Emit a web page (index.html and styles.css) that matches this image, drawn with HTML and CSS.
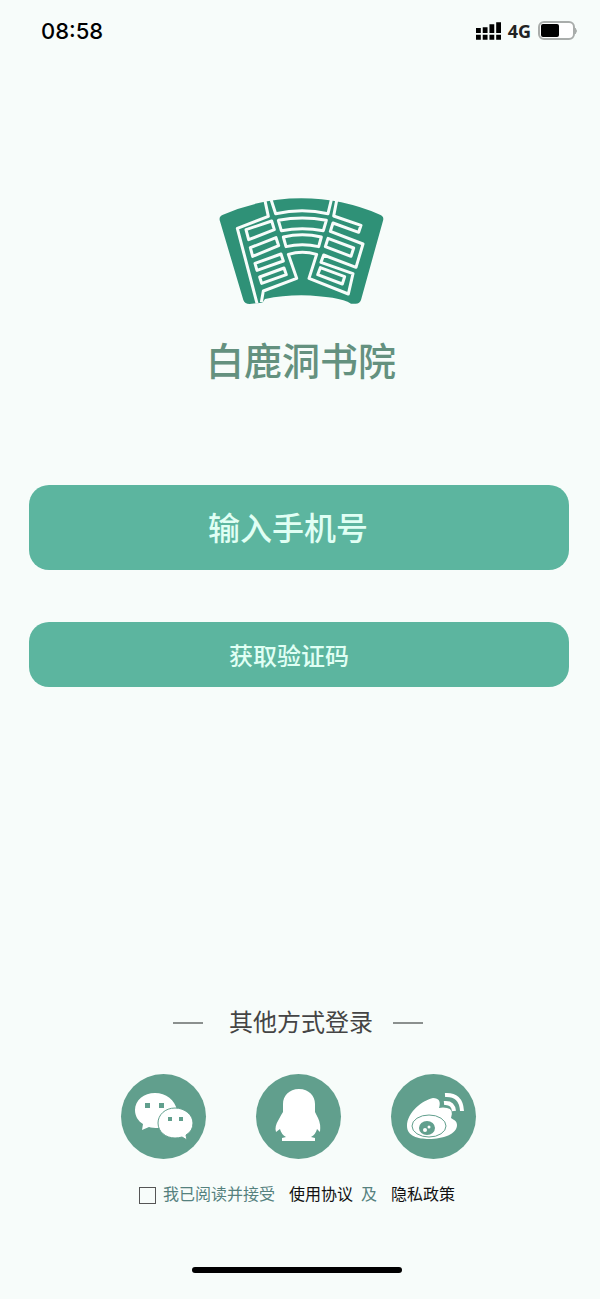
FILE: index.html
```html
<!DOCTYPE html>
<html lang="zh-CN">
<head>
<meta charset="utf-8">
<meta name="viewport" content="width=device-width, initial-scale=1">
<title>白鹿洞书院</title>
<link rel="stylesheet" href="styles.css">
</head>
<body>
<div class="screen">
  <header class="status">
    <time class="clock">08:58</time>
    <div class="indicators">
      <svg class="signal" viewBox="0 0 26 18" aria-hidden="true">
        <path d="M0 6h5v5H0zM7 5h5v6H7zM14 2h5v9h-5zM21 0h5v11h-5zM0 13h5v5H0zM7 13h5v5H7zM14 13h5v5h-5zM21 13h5v5h-5z"/>
      </svg>
      <span class="network">4G</span>
      <svg class="battery" viewBox="0 0 40 20" aria-hidden="true">
        <rect x="1" y="1" width="35" height="17" rx="5" fill="#fff" stroke="#a9adab" stroke-width="2"/>
        <rect x="3" y="3" width="18" height="13" rx="2"/>
        <path d="M37 7q3 3 0 6z" fill="#a9adab" stroke="#a9adab"/>
      </svg>
    </div>
  </header>

  <main class="content">
    <div class="brand">
      <svg class="logo" viewBox="30 24 495 318" aria-hidden="true">
        <path fill="#2f9177" d="M42 74Q155 25 277 25T513 74Q526 79 522 92L456 330Q452 342 438 341H426Q390 319 277 316Q220 316 168 327L160 338L122 342Q107 342 103 330L33 94Q28 79 42 74Z"/>
        <g class="seal" transform="translate(60 15)">
          <path d="M106 8L118 64L25 100L84 325"/>
          <path d="M123 4L140 56Q220 38 297 56L309 6"/>
          <path d="M325 6L314 63L396 91L389 112L312 84L304 109L402 147L381 217L284 180L276 202L372 236L358 297L240 250L263 178Q220 166 178 178L203 250L103 288L97 322"/>
          <path d="M148 76Q220 62 292 76L283 107Q220 95 157 107Z"/>
          <path d="M163 126Q220 113 277 126L269 155Q220 143 171 155Z"/>
          <path d="M51 104L128 78L136 104L59 134Z"/>
          <path d="M64 158L141 128L149 152L71 184Z"/>
          <path d="M78 205L156 177L163 198L84 226Z"/>
          <path d="M92 246L165 219L172 239L98 265Z"/>
          <path d="M297 130L374 159L366 184L289 155Z"/>
          <path d="M274 218L347 245L340 267L266 239Z"/>
        </g>
      </svg>
      <h1 class="name">白鹿洞书院</h1>
    </div>

    <form class="login" id="login">
      <input class="field phone" type="tel" placeholder="输入手机号" aria-label="输入手机号">
      <button class="field code" type="button">获取验证码</button>
    </form>

    <section class="other">
      <h2 class="divider"><span class="divider-text">其他方式登录</span></h2>
      <div class="socials">
        <button class="social" type="button" aria-label="微信">
          <svg viewBox="0 0 85 85" aria-hidden="true">
            <path fill="#fff" d="M34 19C23 19 14 26 14 36C14 42 17 47 22 50L21 56L28 53Q31 54 38 54L56 36C54 26 45 19 34 19Z"/>
            <path fill="#fff" stroke="#619f8d" stroke-width="1" d="M54 34C44 34 37 41 37 49C37 58 45 64 54 64Q58 64 61 63L66 66L65 61Q72 57 72 49C72 41 64 34 54 34Z"/>
            <path fill="#619f8d" d="M24 29h5v5h-5zM38 29h5v5h-5zM47 43h4v4h-4zM58 43h4v4h-4z"/>
          </svg>
        </button>
        <button class="social" type="button" aria-label="QQ">
          <svg viewBox="0 0 85 85" aria-hidden="true">
            <path fill="#fff" d="M43 15C33 15 27 22 27 30V38Q25 41 23 45Q18 53 20 58L24 55Q25 60 30 63L26 64V67H59V64L55 63Q60 60 61 55L64 58Q65 50 62 44L59 38V30C59 22 53 15 43 15Z"/>
          </svg>
        </button>
        <button class="social" type="button" aria-label="微博">
          <svg viewBox="0 0 85 85" aria-hidden="true">
            <path fill="#fff" d="M42 24C32 26 16 38 16 52C16 62 27 65 38 65C52 65 66 60 66 51C66 47 63 46 60 44Q63 35 56 34Q52 33 48 34Q51 24 42 24Z"/>
            <ellipse cx="38" cy="52" rx="17" ry="11" fill="#fff" stroke="#619f8d"/>
            <ellipse cx="36" cy="54" rx="8" ry="7" fill="#619f8d"/>
            <circle cx="34" cy="56" r="2" fill="#fff"/>
            <circle cx="38" cy="53" r="1.5" fill="#fff"/>
            <path fill="none" stroke="#fff" stroke-width="4" d="M54 21Q70 20 71 37M53 29Q62 28 63 37"/>
          </svg>
        </button>
      </div>
      <div class="terms">
        <input class="tick" type="checkbox" id="agree">
        <label class="agree" for="agree">我已阅读并接受</label>
        <a class="link" href="#terms">使用协议</a>
        <span class="and">及</span>
        <a class="link privacy" href="#privacy">隐私政策</a>
      </div>
    </section>
  </main>
  <div class="home-bar"></div>
</div>
</body>
</html>
```
FILE: styles.css
```css
* {
  box-sizing: border-box;
}

body {
  margin: 0;
  background: #f7fcfa;
  color: #000;
  font-family: "Liberation Sans", "Noto Sans CJK SC", sans-serif;
}

.screen {
  display: flex;
  flex-direction: column;
  align-items: center;
  min-height: 100vh;
  padding-bottom: 26px;
}

.status {
  display: flex;
  justify-content: space-between;
  align-items: center;
  align-self: stretch;
  height: 62px;
  padding: 0 22px 0 41px;
}

.clock {
  font-family: Inter, sans-serif;
  font-size: 22px;
  font-weight: 500;
}

.indicators {
  display: flex;
  align-items: center;
  gap: 7px;
}

.signal {
  width: 25px;
  height: 18px;
}

.network {
  color: #222;
  font-family: "Noto Sans", sans-serif;
  font-size: 18px;
  font-weight: 700;
  line-height: 24px;
}

.battery {
  width: 40px;
  height: 20px;
}

.content {
  display: flex;
  flex: 1;
  flex-direction: column;
  align-self: stretch;
  padding: 136px 31px 0 29px;
}

.brand {
  display: flex;
  flex-direction: column;
  align-items: center;
  gap: 30px;
  padding-left: 4px;
}

.logo {
  width: 165px;
  height: 106px;
}

.seal {
  fill: none;
  stroke: #f7fcfa;
  stroke-width: 9;
  stroke-linejoin: round;
}

.name {
  margin: 0;
  color: #64917f;
  font-size: 38px;
  font-weight: 500;
  line-height: 56px;
}

.login {
  display: flex;
  flex-direction: column;
  gap: 52px;
  margin-top: 95px;
}

.field {
  width: 100%;
  padding: 0 20px 0 0;
  border: 0;
  border-radius: 20px;
  background: #5cb59f;
  color: #e0fff4;
  font-family: inherit;
  font-weight: 500;
  text-align: center;
}

.phone {
  height: 85px;
  padding: 4px 22px 0 0;
  font-size: 32px;
}

.phone::placeholder {
  color: #e0fff4;
  opacity: 1;
}

.code {
  height: 65px;
  font-size: 24px;
}

.other {
  display: flex;
  flex-direction: column;
  align-items: center;
  margin-top: auto;
  padding: 0 2px 60px 0;
}

.divider {
  display: flex;
  align-items: center;
  margin: 0;
  color: #444;
  font-size: 24px;
  font-weight: 400;
  line-height: 36px;
}

.divider-text {
  padding: 0 20px 0 26px;
}

.divider::before,
.divider::after {
  width: 30px;
  height: 2px;
  background: #8b908e;
  content: "";
}

.socials {
  display: flex;
  gap: 50px;
  margin-top: 33px;
}

.social {
  width: 85px;
  height: 85px;
  padding: 0;
  border: 0;
  border-radius: 50%;
  background: #619f8d;
}

.social svg {
  display: block;
  width: 100%;
}

.terms {
  display: flex;
  align-items: center;
  margin: 24px 2px 0 0;
  font-size: 16px;
  line-height: 24px;
}

.tick {
  width: 17px;
  height: 17px;
  margin: 0 7px 0 0;
  border: 1px solid #555;
  appearance: none;
}

.tick:checked {
  background: #5cb59f;
}

.agree,
.and {
  color: #55817e;
}

.link {
  margin: 0 8px 0 14px;
  color: #111;
  text-decoration: none;
}

.privacy {
  margin-right: 0;
}

.home-bar {
  width: 35%;
  height: 6px;
  margin-right: 6px;
  border-radius: 3px;
  background: #000;
}
```
